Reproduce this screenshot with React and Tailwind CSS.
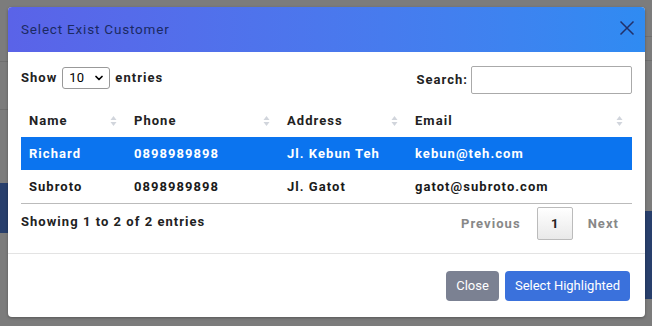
import React, { useState } from "react";
import { ChevronDown } from "lucide-react";

const customers = [
  { name: "Richard", phone: "0898989898", address: "Jl. Kebun Teh", email: "kebun@teh.com" },
  { name: "Subroto", phone: "0898989898", address: "Jl. Gatot", email: "gatot@subroto.com" },
];

function SortIcon() {
  return (
    <svg width="7" height="12" viewBox="0 0 7 12" className="text-gray-300">
      <path d="M3.5 1 L6.5 5 H0.5 Z" fill="currentColor" />
      <path d="M3.5 11 L6.5 7 H0.5 Z" fill="currentColor" />
    </svg>
  );
}

export default function App() {
  const [selected, setSelected] = useState(0);

  return (
    <div className="relative w-[652px] h-[326px] overflow-hidden bg-[#7c7c7c] font-['Roboto',sans-serif]">
      {/* dimmed page behind */}
      <div className="flex h-full">
        <div className="w-[8px] flex flex-col">
          <div className="h-[62px] border-b border-[#6f6f6f]" />
          <div className="h-[48px] border-b border-[#6f6f6f]" />
          <div className="h-[73px]" />
          <div className="h-[50px] bg-[#283f6c]" />
        </div>
        <div className="flex-1" />
        <div className="w-[8px] flex flex-col">
          <div className="h-[37px] border-b border-[#6f6f6f]" />
          <div className="h-[24px] border-b border-[#6f6f6f]" />
          <div className="h-[150px]" />
          <div className="h-[88px] bg-[#283f6c]" />
        </div>
      </div>

      {/* modal */}
      <div className="absolute left-[8px] top-[7px] w-[637px] h-[310px] bg-white rounded-[4px] overflow-hidden shadow-[0_1px_3px_rgba(0,0,0,0.3)] flex flex-col">
        <div className="h-[45px] shrink-0 flex items-center justify-between pl-[13px] pr-[10px] bg-gradient-to-r from-[#5a63e8] to-[#2f8bf2]">
          <span className="text-[13.5px] tracking-[0.06em] text-[#1b2a63]">Select Exist Customer</span>
          <svg width="16" height="16" viewBox="0 0 16 16" className="text-[#22306a] -mt-[4px]">
            <path d="M1.5 1.5 L14.5 14.5 M14.5 1.5 L1.5 14.5" stroke="currentColor" strokeWidth="1.5" />
          </svg>
        </div>

        <div className="px-[13px] pt-[9px] flex-1 border-b border-[#e3e3e3]">
          <div className="flex items-center justify-between">
            <div className="flex items-center gap-[5px] text-[13px] font-bold tracking-[0.08em] text-[#222]">
              <span>Show</span>
              <div className="w-[48px] h-[22px] border border-[#999] rounded-[3px] flex items-center justify-between pl-[6px] pr-[4px] font-normal tracking-normal text-[13px] text-black">
                <span>10</span>
                <ChevronDown size={12} strokeWidth={3.5} />
              </div>
              <span>entries</span>
            </div>
            <div className="flex items-center gap-[3px] text-[13px] font-bold tracking-[0.08em] text-[#222] pt-[5px]">
              <span>Search:</span>
              <div className="w-[161px] h-[28px] border border-[#aaa] rounded-[2px]" />
            </div>
          </div>

          <div className="mt-[11px] text-[13px] font-bold tracking-[0.08em]">
            <div className="flex h-[32px] items-center text-[#222]">
              <div className="w-[105px] flex items-center justify-between pl-[8px] pr-[9px]"><span>Name</span><SortIcon /></div>
              <div className="w-[153px] flex items-center justify-between pl-[8px] pr-[9px]"><span>Phone</span><SortIcon /></div>
              <div className="w-[128px] flex items-center justify-between pl-[8px] pr-[9px]"><span>Address</span><SortIcon /></div>
              <div className="flex-1 flex items-center justify-between pl-[8px] pr-[9px]"><span>Email</span><SortIcon /></div>
            </div>
            {customers.map((c, i) => (
              <div
                key={c.name}
                onClick={() => setSelected(i)}
                className={`flex h-[33px] items-center ${selected === i ? "bg-[#0b74ef] text-white" : "text-[#1a1a1a]"}`}
              >
                <div className="w-[105px] pl-[8px]">{c.name}</div>
                <div className="w-[153px] pl-[8px]">{c.phone}</div>
                <div className="w-[128px] pl-[8px]">{c.address}</div>
                <div className="flex-1 pl-[8px]">{c.email}</div>
              </div>
            ))}
            <div className="border-t border-[#bbb]" />
          </div>

          <div className="flex items-center justify-between text-[13px] font-bold tracking-[0.08em] mt-[3px]">
            <span className="text-[#222] -mt-[3px]">Showing 1 to 2 of 2 entries</span>
            <div className="flex items-center">
              <span className="text-[#888] px-[16px]">Previous</span>
              <span className="w-[36px] h-[33px] flex items-center justify-center border border-[#bbb] rounded-[2px] bg-gradient-to-b from-white to-[#e9e9e9] text-[#222] tracking-normal">1</span>
              <span className="text-[#888] pl-[15px] pr-[13px]">Next</span>
            </div>
          </div>
        </div>

        <div className="h-[63px] shrink-0 flex items-center justify-end gap-[6px] pr-[15px]">
          <button className="h-[30px] w-[53px] rounded-[4px] bg-[#7b8192] text-white text-[13px]">Close</button>
          <button className="h-[30px] w-[125px] rounded-[4px] bg-[#3a71dc] text-white text-[13px]">Select Highlighted</button>
        </div>
      </div>
    </div>
  );
}
